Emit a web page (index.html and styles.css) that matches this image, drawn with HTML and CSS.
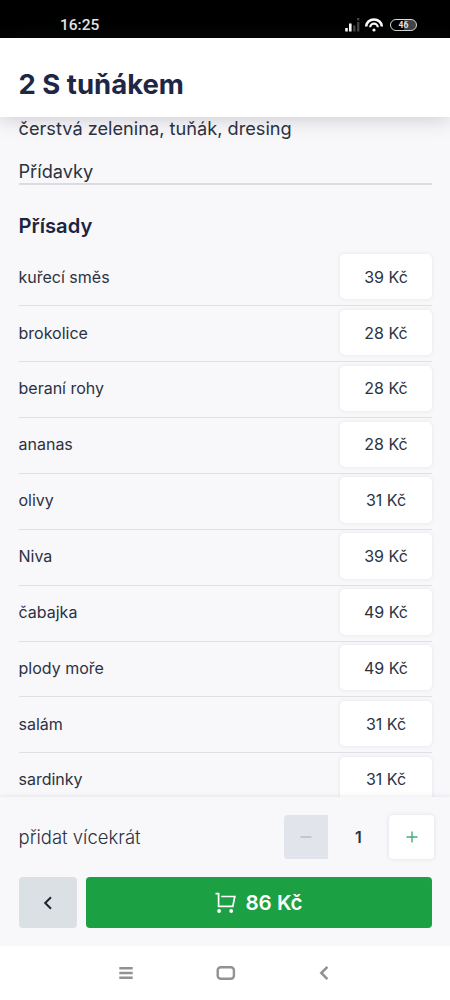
FILE: index.html
```
<!DOCTYPE html>
<html lang="cs">
<head>
    <meta charset="UTF-8">
    <meta name="viewport" content="width=device-width, initial-scale=1">
    <title>2 S tuňákem</title>
    <link rel="stylesheet" href="styles.css">
</head>
<body>
    <div class="screen">
        <div class="status-bar">
            <span class="time">16:25</span>
            <div class="status-icons">
                <svg class="signal" width="15" height="14" viewBox="0 0 15 14">
                    <path d="M1.5 10v3.5M5.3 5.5v8" stroke="#fff" stroke-width="2.6"/>
                    <path d="M9.3 7.5v6M13.2 4v9.5M13.2 0v2.4" stroke="#444" stroke-width="2.4"/>
                </svg>
                <svg class="wifi" width="18" height="14" viewBox="0 0 18 14" fill="none" stroke="#fff">
                    <path d="M1.2 8.6a7.8 7.2 0 0 1 15.6 0" stroke-width="2.5"/>
                    <path d="M5.2 9.3a3.8 3.7 0 0 1 7.6 0" stroke-width="2.2"/>
                    <circle cx="9" cy="12" r="1.6" fill="#fff" stroke="none"/>
                </svg>
                <span class="battery">46</span>
            </div>
        </div>

        <header class="header">
            <h1>2 S tuňákem</h1>
        </header>

        <main class="content">
            <p class="description">čerstvá zelenina, tuňák, dresing</p>
            <p class="extras-label">Přídavky</p>
            <h2>Přísady</h2>
            <ul class="extras">
                <li><span>kuřecí směs</span><button class="price">39 Kč</button></li>
                <li><span>brokolice</span><button class="price">28 Kč</button></li>
                <li><span>beraní rohy</span><button class="price">28 Kč</button></li>
                <li><span>ananas</span><button class="price">28 Kč</button></li>
                <li><span>olivy</span><button class="price">31 Kč</button></li>
                <li><span>Niva</span><button class="price">39 Kč</button></li>
                <li><span>čabajka</span><button class="price">49 Kč</button></li>
                <li><span>plody moře</span><button class="price">49 Kč</button></li>
                <li><span>salám</span><button class="price">31 Kč</button></li>
                <li><span>sardinky</span><button class="price">31 Kč</button></li>
            </ul>
        </main>

        <footer class="order">
            <div class="quantity">
                <span class="quantity-label">přidat vícekrát</span>
                <button class="step minus" aria-label="Ubrat">
                    <svg width="12" height="12" viewBox="0 0 12 12"><path d="M0.5 6h11" stroke="#b3b7bf" stroke-width="1.3"/></svg>
                </button>
                <span class="count">1</span>
                <button class="step plus" aria-label="Přidat">
                    <svg width="12" height="12" viewBox="0 0 12 12"><path d="M0.5 6h11M6 0.5v11" stroke="#45ad7e" stroke-width="1.4"/></svg>
                </button>
            </div>
            <div class="actions">
                <button class="back" aria-label="Zpět">
                    <svg width="10" height="14" viewBox="0 0 10 14" fill="none"><path d="M8 1.2L2.2 7 8 12.8" stroke="#20252c" stroke-width="2"/></svg>
                </button>
                <button class="add">
                    <svg width="22" height="22" viewBox="0 0 22 22" fill="none">
                        <path d="M0.5 1.7h3.1v12.6h14.2L19.8 4.5H6.2" stroke="#fff" stroke-width="1.7"/>
                        <circle cx="4.1" cy="19" r="1.9" fill="#fff"/>
                        <circle cx="16.2" cy="19" r="1.9" fill="#fff"/>
                    </svg>
                    <span>86 Kč</span>
                </button>
            </div>
        </footer>

        <nav class="nav-bar">
            <svg width="14" height="14" viewBox="0 0 14 14"><path d="M0.3 2.2h13.4M0.3 7h13.4M0.3 11.8h13.4" stroke="#929292" stroke-width="2.4"/></svg>
            <svg width="20" height="14" viewBox="0 0 20 14" fill="none"><rect x="1.7" y="1.2" width="16.2" height="11.6" rx="3" stroke="#929292" stroke-width="2.4"/></svg>
            <svg width="10" height="14" viewBox="0 0 10 14" fill="none"><path d="M8.4 0.9L2.3 7l6.1 6.1" stroke="#929292" stroke-width="2.5"/></svg>
        </nav>
    </div>
</body>
</html>
```
FILE: styles.css
```
* {
    box-sizing: border-box;
}
body {
    margin: 0;
    font-family: Inter, "Liberation Sans", sans-serif;
    color: #2b3242;
    background-color: #fff;
}
h1, h2, p, ul {
    margin: 0;
    padding: 0;
}
button {
    padding: 0;
    border: none;
    font-family: inherit;
    color: inherit;
}
svg {
    display: block;
    flex: none;
}
.screen {
    display: flex;
    flex-direction: column;
    height: 1000px;
    overflow: hidden;
}
.status-bar {
    flex: none;
    display: flex;
    justify-content: space-between;
    height: 37.5px;
    padding: 15px 33px 0 60px;
    background-color: #000;
    color: #e8e8e8;
}
.time {
    font-family: Roboto, sans-serif;
    font-size: 15.5px;
    font-weight: 500;
    line-height: 21px;
}
.status-icons {
    display: flex;
    align-items: flex-start;
    padding-top: 3px;
}
.wifi {
    margin: 0 7px 0 5px;
}
.battery {
    width: 27px;
    height: 12px;
    margin-top: 1px;
    border: 1.5px solid #ddd;
    border-radius: 6px;
    background: linear-gradient(90deg, #000 50%, #444 50%);
    font: bold 8.5px/10px Roboto, sans-serif;
    text-align: center;
}
.header {
    flex: none;
    position: relative;
    z-index: 1;
    height: 79.5px;
    padding: 27.5px 18.5px 0;
    background-color: #fff;
    box-shadow: 0 0 20px rgba(40, 42, 60, 0.25);
}
h1 {
    font-size: 27.5px;
    line-height: 38px;
    font-weight: 700;
    color: #1e2746;
}
.content {
    flex: 1;
    min-height: 0;
    overflow: hidden;
    padding: 0 18px 0 18.5px;
    background-color: #f8f7fa;
}
.description {
    font-size: 18.2px;
    line-height: 22px;
}
.extras-label {
    margin-top: 19px;
    height: 27px;
    border-bottom: 2px solid #dcdce0;
    font-size: 18.2px;
    line-height: 27px;
}
h2 {
    margin: 27px 0 10.5px;
    font-size: 20.2px;
    line-height: 28px;
    font-weight: 600;
    color: #1c2540;
}
.extras {
    list-style: none;
}
.extras li {
    display: flex;
    align-items: center;
    justify-content: space-between;
    height: 55.87px;
    padding-bottom: 2.5px;
    border-bottom: 1px solid #e0dfe3;
    font-size: 16px;
}
.price {
    width: 92px;
    height: 45.5px;
    border-radius: 5px;
    background-color: #fff;
    box-shadow: 0 0 4px rgba(40, 40, 70, 0.09);
    font-size: 16px;
}
.order {
    flex: none;
    position: relative;
    z-index: 1;
    height: 149px;
    padding: 18.5px 18px 0 18.5px;
    background-color: #f8f7fa;
    box-shadow: 0 0 5px rgba(40, 40, 60, 0.12);
}
.quantity {
    display: flex;
    align-items: center;
    height: 44px;
    margin-right: -2px;
}
.quantity-label {
    flex: 1;
    font-size: 18.5px;
    font-weight: 300;
}
.step {
    display: flex;
    align-items: center;
    justify-content: center;
    width: 44px;
    height: 44px;
    border-radius: 4px;
}
.minus {
    border-radius: 4px 0 0 4px;
    background-color: #e1e4eb;
}
.plus {
    width: 45px;
    background-color: #fff;
    box-shadow: 0 0 4px rgba(40, 40, 70, 0.12);
}
.count {
    width: 61px;
    font-size: 16px;
    font-weight: 600;
    text-align: center;
}
.actions {
    display: flex;
    gap: 9px;
    margin-top: 18px;
}
.back,
.add {
    display: flex;
    align-items: center;
    justify-content: center;
    height: 51px;
    border-radius: 4px;
}
.back {
    width: 58.5px;
    background-color: #dbe0e4;
}
.add {
    flex: 1;
    gap: 8px;
    background-color: #1ba143;
    color: #fff;
    font-size: 20.6px;
    font-weight: 600;
}
.nav-bar {
    flex: none;
    position: relative;
    z-index: 2;
    display: flex;
    align-items: center;
    justify-content: space-between;
    height: 54.5px;
    padding: 0 121px 0 119px;
    background-color: #fff;
}
```
